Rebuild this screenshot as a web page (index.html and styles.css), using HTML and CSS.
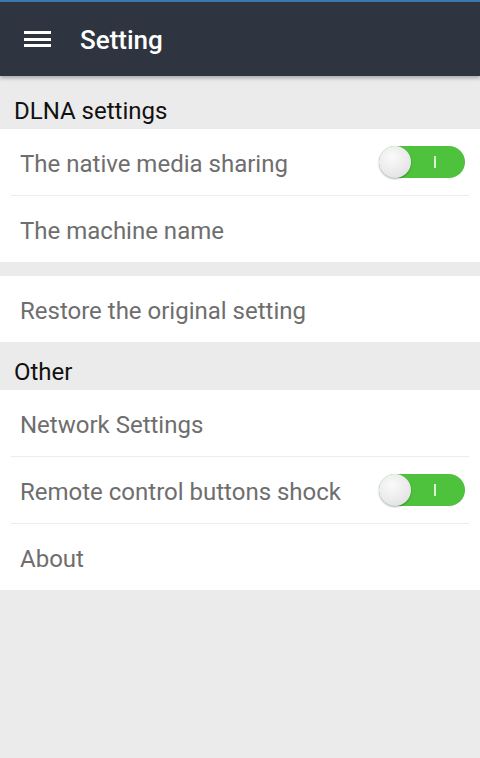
FILE: index.html
```html
<!DOCTYPE html>
<html>
<head>
<meta charset="utf-8">
<link rel="stylesheet" href="styles.css">
</head>
<body>
<div class="topline"></div>
<header class="toolbar">
  <svg class="menu" width="28" height="20" viewBox="0 0 28 20">
    <rect x="0" y="2" width="27" height="3" fill="#fff"/>
    <rect x="0" y="9" width="27" height="3" fill="#fff"/>
    <rect x="0" y="15" width="27" height="3" fill="#fff"/>
  </svg>
  <span class="title">Setting</span>
</header>
<main>
  <div class="section-head">DLNA settings</div>
  <div class="group">
    <div class="row sep"><span class="label">The native media sharing</span><div class="switch"><div class="knob"></div><div class="mark"></div></div></div>
    <div class="row"><span class="label">The machine name</span></div>
  </div>
  <div class="gap"></div>
  <div class="group">
    <div class="row"><span class="label">Restore the original setting</span></div>
  </div>
  <div class="section-head other">Other</div>
  <div class="group">
    <div class="row sep"><span class="label">Network Settings</span></div>
    <div class="row sep"><span class="label">Remote control buttons shock</span><div class="switch"><div class="knob"></div><div class="mark"></div></div></div>
    <div class="row"><span class="label">About</span></div>
  </div>
</main>
</body>
</html>
```
FILE: styles.css
```css
html, body {
  margin: 0;
  padding: 0;
  background: #ebebeb;
  font-family: Roboto, "Noto Sans", sans-serif;
  height: 100%;
}
.topline {
  height: 2px;
  background: #3b7ab3;
}
.toolbar {
  height: 74px;
  background: #2f3540;
  display: flex;
  align-items: center;
  box-shadow: 0 2px 4px rgba(0,0,0,0.3);
  position: relative;
  z-index: 1;
}
.menu {
  margin-left: 24px;
  margin-right: 28px;
}
.title {
  color: #fff;
  font-size: 26px;
  font-weight: 500;
  padding-top: 2px;
}
.section-head {
  height: 53px;
  box-sizing: border-box;
  padding: 20px 0 0 14px;
  font-size: 24px;
  color: #111;
  line-height: 30px;
}
.section-head.other {
  height: 48px;
  padding-top: 15px;
}
.group {
  background: #fff;
}
.row {
  height: 66px;
  margin: 0 11px;
  padding: 0 0 0 9px;
  display: flex;
  align-items: center;
  justify-content: space-between;
  font-size: 24px;
  color: #6e6e6e;
}
.label {
  padding-top: 4px;
}
.row.sep {
  border-bottom: 1px solid #ececec;
}
.gap {
  height: 14px;
}
.switch {
  position: relative;
  width: 86px;
  height: 32px;
  border-radius: 16px;
  background: #4ec23c;
  margin-right: 4px;
}
.knob {
  position: absolute;
  left: 0;
  top: 0;
  width: 32px;
  height: 32px;
  border-radius: 50%;
  background: radial-gradient(circle at 40% 35%, #fafafa 0%, #e6e6e8 70%, #cfd0d4 100%);
  box-shadow: 0 1px 2px rgba(0,0,0,0.3);
}
.mark {
  position: absolute;
  left: 55px;
  top: 10px;
  width: 2px;
  height: 12px;
  background: #d8f2cf;
}
```
